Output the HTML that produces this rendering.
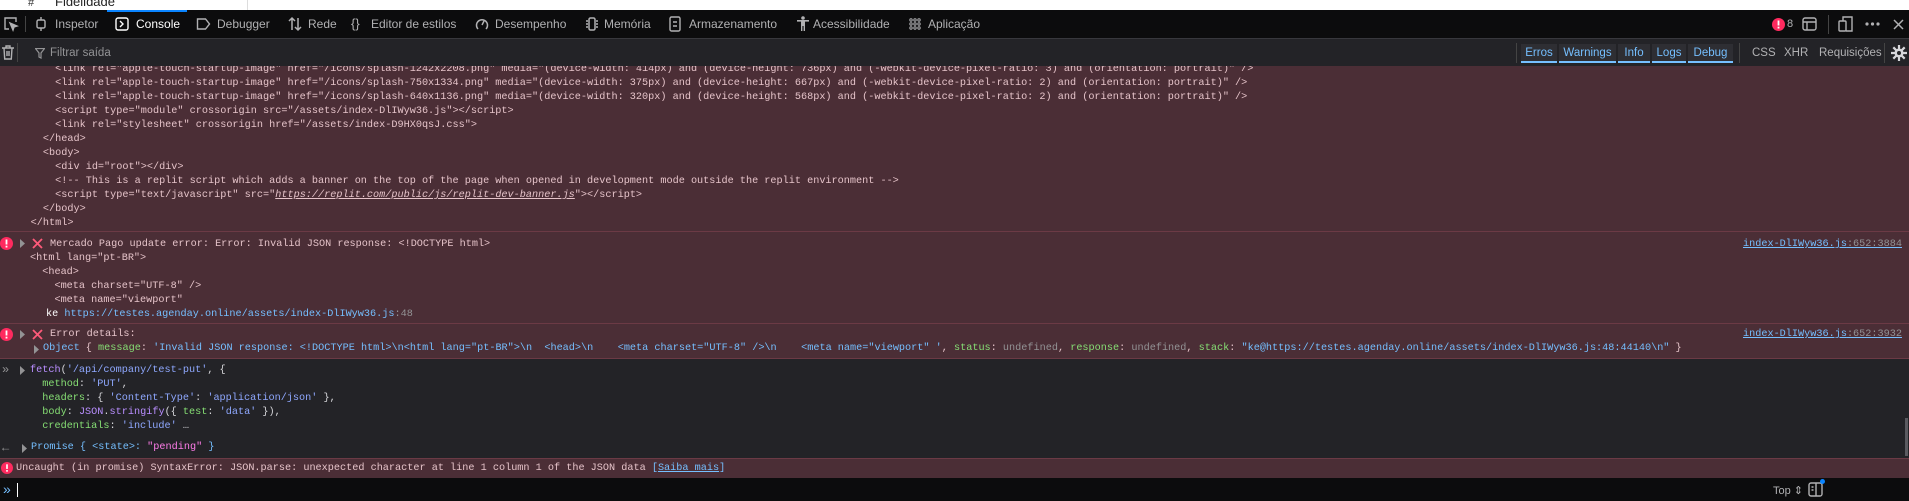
<!DOCTYPE html>
<html><head><meta charset="utf-8">
<style>
*{margin:0;padding:0;box-sizing:border-box}
body{width:1909px;height:501px;overflow:hidden;background:#232327;position:relative;font-family:"Liberation Sans",sans-serif}
.a{position:absolute}
.m{font-family:"Liberation Mono",monospace;font-size:10.2px;line-height:14px;white-space:pre;position:absolute}
.tab{position:absolute;top:10px;height:28px;line-height:28px;font-size:12px;color:#b1b1b3}
.fb{position:absolute;top:44px;height:19px;line-height:18px;font-size:11.5px;color:#75bfff;background:#2e2e33;border-bottom:2px solid #75bfff;text-align:center}
.e{color:#e5c3c9}
.l{color:#75bfff}
.g{color:#86de74}
.s{color:#8fa8ff}
.p{color:#b98eff}
.k{color:#ff7de9}
.gr{color:#939395}
.sep{position:absolute;left:0;width:1909px;height:1px;background:#6b3a45}
svg{position:absolute}
</style></head><body>
<div class="a" style="left:0;top:0;width:1909px;height:10px;background:#fff"></div>
<div class="a" style="left:247px;top:0;width:1px;height:10px;background:#ddd"></div>
<div class="a" style="left:55px;top:-6px;font-size:13px;color:#222">Fidelidade</div>
<div class="a" style="left:28px;top:-3px;font-size:11px;color:#333">#</div>
<div class="a" style="left:0;top:10px;width:1909px;height:28px;background:#0c0c0d"></div>
<div class="a" style="left:107px;top:10px;width:80px;height:2px;background:#0a84ff"></div>
<svg style="left:3px;top:16px" width="16" height="16" viewBox="0 0 16 16" fill="none" stroke="#b1b1b3" stroke-width="1.4"><path d="M6 13H2V2h11v4"/><path d="M7 7l7 3-3 1-1 3z" fill="#b1b1b3"/></svg>
<div class="a" style="left:25px;top:16px;width:1px;height:16px;background:#444"></div>
<svg style="left:34px;top:17px" width="14" height="14" viewBox="0 0 14 14" fill="none" stroke="#b1b1b3" stroke-width="1.4"><rect x="3" y="3" width="8" height="8" rx="1.5"/><path d="M7 0v3M7 11v3"/></svg>
<div class="tab" style="left:55px">Inspetor</div>
<svg style="left:115px;top:17px" width="14" height="14" viewBox="0 0 14 14" fill="none" stroke="#fff" stroke-width="1.4"><rect x="1" y="1" width="12" height="12" rx="2"/><path d="M5 4l3 3-3 3"/></svg>
<div class="tab" style="left:136px;color:#fff">Console</div>
<svg style="left:196px;top:17px" width="15" height="14" viewBox="0 0 15 14" fill="none" stroke="#b1b1b3" stroke-width="1.4"><path d="M1.5 2h8l4 5-4 5h-8z"/></svg>
<div class="tab" style="left:217px">Debugger</div>
<svg style="left:287px;top:16px" width="16" height="16" viewBox="0 0 16 16" fill="none" stroke="#b1b1b3" stroke-width="1.5"><path d="M5 14V2M2 5l3-3 3 3M11 2v12M8 11l3 3 3-3"/></svg>
<div class="tab" style="left:308px">Rede</div>
<div class="tab" style="left:351px;color:#b1b1b3;font-size:13px">{}</div>
<div class="tab" style="left:371px">Editor de estilos</div>
<svg style="left:475px;top:17px" width="14" height="14" viewBox="0 0 14 14" fill="none" stroke="#b1b1b3" stroke-width="1.5"><path d="M3 12A5.5 5.5 0 1 1 11 12"/><path d="M7 8l2-4"/></svg>
<div class="tab" style="left:495px">Desempenho</div>
<svg style="left:585px;top:17px" width="14" height="14" viewBox="0 0 14 14" fill="none" stroke="#b1b1b3" stroke-width="1.5"><rect x="4" y="1" width="6" height="12" rx="1.5"/><path d="M1 4h2M1 7h2M1 10h2M11 4h2M11 7h2M11 10h2"/></svg>
<div class="tab" style="left:604px">Memória</div>
<svg style="left:669px;top:16px" width="12" height="16" viewBox="0 0 12 16" fill="none" stroke="#b1b1b3" stroke-width="1.4"><rect x="1" y="1" width="10" height="14" rx="1.5"/><path d="M4 6h4M4 10h4"/></svg>
<div class="tab" style="left:689px">Armazenamento</div>
<svg style="left:797px;top:16px" width="12" height="16" viewBox="0 0 12 16" fill="#b1b1b3"><circle cx="6" cy="2" r="1.8"/><path d="M0 4h12v1.6H8V15H6.6v-5H5.4v5H4V5.6H0z"/></svg>
<div class="tab" style="left:813px">Acessibilidade</div>
<svg style="left:909px;top:18px" width="12" height="12" viewBox="0 0 12 12" fill="none" stroke="#b1b1b3" stroke-width="1"><circle cx="2" cy="2" r="1.2"/><circle cx="6" cy="2" r="1.2"/><circle cx="10" cy="2" r="1.2"/><circle cx="2" cy="6" r="1.2"/><circle cx="6" cy="6" r="1.2"/><circle cx="10" cy="6" r="1.2"/><circle cx="2" cy="10" r="1.2"/><circle cx="6" cy="10" r="1.2"/><circle cx="10" cy="10" r="1.2"/></svg>
<div class="tab" style="left:928px">Aplicação</div>
<svg style="left:1772px;top:18px" width="13" height="13" viewBox="0 0 13 13"><circle cx="6.5" cy="6.5" r="6.5" fill="#ff2a5f"/><rect x="5.6" y="2.5" width="1.8" height="5" fill="#fff"/><rect x="5.6" y="8.7" width="1.8" height="1.8" fill="#fff"/></svg>
<div class="a" style="left:1787px;top:18px;font-size:11px;color:#b1b1b3">8</div>
<svg style="left:1802px;top:17px" width="15" height="14" viewBox="0 0 15 14" fill="none" stroke="#b1b1b3" stroke-width="1.4"><rect x="1" y="1" width="13" height="12" rx="2"/><path d="M1 5h13M5 5v8"/></svg>
<div class="a" style="left:1828px;top:15px;width:1px;height:19px;background:#444"></div>
<svg style="left:1838px;top:16px" width="15" height="16" viewBox="0 0 15 16" fill="none" stroke="#b1b1b3" stroke-width="1.4"><rect x="1" y="5" width="7" height="10" rx="1"/><path d="M5 5V1h9v14H8"/></svg>
<svg style="left:1865px;top:22px" width="15" height="4" viewBox="0 0 15 4" fill="#b1b1b3"><circle cx="2" cy="2" r="1.6"/><circle cx="7.5" cy="2" r="1.6"/><circle cx="13" cy="2" r="1.6"/></svg>
<svg style="left:1893px;top:19px" width="11" height="11" viewBox="0 0 11 11" stroke="#b1b1b3" stroke-width="1.5"><path d="M1 1l9 9M10 1l-9 9"/></svg>
<div class="a" style="left:0;top:38px;width:1909px;height:28px;background:#232327;border-top:1px solid #38383d"></div>
<svg style="left:2px;top:45px" width="12" height="15" viewBox="0 0 12 15" fill="none" stroke="#b1b1b3" stroke-width="1.4"><path d="M0 3h12M4 3V1h4v2M2 3l.7 11h6.6L10 3M5 6v5M7 6v5"/></svg>
<div class="a" style="left:17px;top:43px;width:1px;height:19px;background:#444"></div>
<svg style="left:35px;top:48px" width="10" height="11" viewBox="0 0 10 11" fill="none" stroke="#939395" stroke-width="1.2"><path d="M.5 .5h9L6 5v5l-2-1V5z"/></svg>
<div class="a" style="left:50px;top:47px;font-size:11.5px;color:#939395">Filtrar saída</div>
<div class="a" style="left:1516px;top:43px;width:1px;height:20px;background:#444"></div>
<div class="fb" style="left:1521px;width:36px">Erros</div>
<div class="fb" style="left:1559px;width:57px">Warnings</div>
<div class="fb" style="left:1618px;width:32px">Info</div>
<div class="fb" style="left:1652px;width:34px">Logs</div>
<div class="fb" style="left:1688px;width:45px">Debug</div>
<div class="a" style="left:1739px;top:43px;width:1px;height:20px;background:#444"></div>
<div class="a" style="left:1752px;top:47px;font-size:11.5px;color:#b1b1b3">CSS</div>
<div class="a" style="left:1784px;top:47px;font-size:11.5px;color:#b1b1b3">XHR</div>
<div class="a" style="left:1819px;top:47px;font-size:11.5px;color:#b1b1b3">Requisições</div>
<div class="a" style="left:1884px;top:43px;width:1px;height:20px;background:#444"></div>
<svg style="left:1891px;top:45px" width="16" height="16" viewBox="0 0 16 16"><g stroke="#d7d7db" stroke-width="2.2"><path d="M8 0v16M0 8h16M2.3 2.3l11.4 11.4M13.7 2.3L2.3 13.7"/></g><circle cx="8" cy="8" r="4.5" fill="#d7d7db"/><circle cx="8" cy="8" r="2" fill="#232327"/></svg>
<div class="a" style="left:0;top:66px;width:1909px;height:292px;background:#4b2e36;overflow:hidden">
<div class="m e" style="left:-6px;top:-3px">          &lt;link rel="apple-touch-startup-image" href="/icons/splash-1242x2208.png" media="(device-width: 414px) and (device-height: 736px) and (-webkit-device-pixel-ratio: 3) and (orientation: portrait)" /&gt;
          &lt;link rel="apple-touch-startup-image" href="/icons/splash-750x1334.png" media="(device-width: 375px) and (device-height: 667px) and (-webkit-device-pixel-ratio: 2) and (orientation: portrait)" /&gt;
          &lt;link rel="apple-touch-startup-image" href="/icons/splash-640x1136.png" media="(device-width: 320px) and (device-height: 568px) and (-webkit-device-pixel-ratio: 2) and (orientation: portrait)" /&gt;
          &lt;script type="module" crossorigin src="/assets/index-DlIWyw36.js"&gt;&lt;/script&gt;
          &lt;link rel="stylesheet" crossorigin href="/assets/index-D9HX0qsJ.css"&gt;
        &lt;/head&gt;
        &lt;body&gt;
          &lt;div id="root"&gt;&lt;/div&gt;
          &lt;!-- This is a replit script which adds a banner on the top of the page when opened in development mode outside the replit environment --&gt;
          &lt;script type="text/javascript" src="<i style="text-decoration:underline">https://replit.com/public/js/replit-dev-banner.js</i>"&gt;&lt;/script&gt;
        &lt;/body&gt;
      &lt;/html&gt;</div>
</div>
<div class="sep" style="top:231px"></div>
<div class="sep" style="top:323px"></div>
<div class="sep" style="top:358px"></div>
<svg style="left:0;top:237px" width="13" height="13" viewBox="0 0 13 13"><circle cx="6.5" cy="6.5" r="6.5" fill="#ff2a5f"/><rect x="5.6" y="2.5" width="1.8" height="5" fill="#fff"/><rect x="5.6" y="8.7" width="1.8" height="1.8" fill="#fff"/></svg>
<svg style="left:20px;top:239px" width="6" height="9" viewBox="0 0 6 9"><path d="M0 0l5 4.5L0 9z" fill="#939395"/></svg>
<svg style="left:32px;top:238px" width="11" height="11" viewBox="0 0 11 11" stroke="#ff5a7a" stroke-width="1.8"><path d="M1 1l9 9M10 1l-9 9"/></svg>
<div class="m e" style="left:50px;top:238px">Mercado Pago update error: Error: Invalid JSON response: &lt;!DOCTYPE html&gt;</div>
<div class="m e" style="left:30px;top:252px">&lt;html lang="pt-BR"&gt;
  &lt;head&gt;
    &lt;meta charset="UTF-8" /&gt;
    &lt;meta name="viewport"</div>
<div class="m" style="left:46px;top:308px;color:#fff">ke <span class="l">https://testes.agenday.online/assets/index-DlIWyw36.js</span><span class="gr">:48</span></div>
<div class="m l" style="left:1743px;top:238px;text-decoration:underline">index-DlIWyw36.js<span class="gr">:652:3884</span></div>
<svg style="left:0;top:328px" width="13" height="13" viewBox="0 0 13 13"><circle cx="6.5" cy="6.5" r="6.5" fill="#ff2a5f"/><rect x="5.6" y="2.5" width="1.8" height="5" fill="#fff"/><rect x="5.6" y="8.7" width="1.8" height="1.8" fill="#fff"/></svg>
<svg style="left:20px;top:330px" width="6" height="9" viewBox="0 0 6 9"><path d="M0 0l5 4.5L0 9z" fill="#939395"/></svg>
<svg style="left:32px;top:329px" width="11" height="11" viewBox="0 0 11 11" stroke="#ff5a7a" stroke-width="1.8"><path d="M1 1l9 9M10 1l-9 9"/></svg>
<div class="m e" style="left:50px;top:328px">Error details:</div>
<div class="m l" style="left:1743px;top:328px;text-decoration:underline">index-DlIWyw36.js<span class="gr">:652:3932</span></div>
<svg style="left:34px;top:345px" width="6" height="9" viewBox="0 0 6 9"><path d="M0 0l5 4.5L0 9z" fill="#939395"/></svg>
<div class="m l" style="left:43px;top:342px">Object <span class="e">{</span> <span class="g">message</span><span class="e">:</span> 'Invalid JSON response: &lt;!DOCTYPE html&gt;\n&lt;html lang="pt-BR"&gt;\n  &lt;head&gt;\n    &lt;meta charset="UTF-8" /&gt;\n    &lt;meta name="viewport" '<span class="e">,</span> <span class="g">status</span><span class="e">:</span> <span class="gr">undefined</span><span class="e">,</span> <span class="g">response</span><span class="e">:</span> <span class="gr">undefined</span><span class="e">,</span> <span class="g">stack</span><span class="e">:</span> "ke@https://testes.agenday.online/assets/index-DlIWyw36.js:48:44140\n" <span class="e">}</span></div>
<div class="m" style="left:2px;top:363px;color:#939395;font-size:12px">»</div>
<svg style="left:20px;top:366px" width="6" height="9" viewBox="0 0 6 9"><path d="M0 0l5 4.5L0 9z" fill="#939395"/></svg>
<div class="m" style="left:30px;top:364px;color:#d7d7db"><span class="p">fetch</span>(<span class="s">'/api/company/test-put'</span>, {
  <span class="g">method</span>: <span class="s">'PUT'</span>,
  <span class="g">headers</span>: { <span class="s">'Content-Type'</span>: <span class="s">'application/json'</span> },
  <span class="g">body</span>: <span class="p">JSON</span>.<span class="p">stringify</span>({ <span class="g">test</span>: <span class="s">'data'</span> }),
  <span class="g">credentials</span>: <span class="s">'include'</span> …</div>
<div class="m" style="left:2px;top:441px;color:#939395;font-size:12px">←</div>
<svg style="left:22px;top:444px" width="6" height="9" viewBox="0 0 6 9"><path d="M0 0l5 4.5L0 9z" fill="#939395"/></svg>
<div class="m" style="left:31px;top:441px;color:#75bfff">Promise { &lt;state&gt;: <span class="k">"pending"</span> }</div>
<div class="a" style="left:1905px;top:418px;width:3px;height:38px;background:#5a5a60"></div>
<div class="a" style="left:0;top:458px;width:1909px;height:20px;background:#4b2e36;border-top:1px solid #6b3a45"></div>
<svg style="left:1px;top:462px" width="12" height="12" viewBox="0 0 13 13"><circle cx="6.5" cy="6.5" r="6.5" fill="#ff2a5f"/><rect x="5.6" y="2.5" width="1.8" height="5" fill="#fff"/><rect x="5.6" y="8.7" width="1.8" height="1.8" fill="#fff"/></svg>
<div class="m e" style="left:16px;top:462px">Uncaught (in promise) SyntaxError: JSON.parse: unexpected character at line 1 column 1 of the JSON data <span class="l">[<u>Saiba mais</u>]</span></div>
<div class="a" style="left:0;top:478px;width:1909px;height:23px;background:#0c0c0d"></div>
<div class="a" style="left:3px;top:481px;color:#75bfff;font-size:14px">»</div>
<div class="a" style="left:17px;top:483px;width:1px;height:14px;background:#fff"></div>
<div class="a" style="left:1773px;top:484px;font-size:11px;color:#b1b1b3">Top ⇕</div>
<svg style="left:1808px;top:481px" width="15" height="16" viewBox="0 0 15 16" fill="none" stroke="#b1b1b3" stroke-width="1.4"><rect x="1" y="2" width="13" height="13" rx="2"/><path d="M8 2v13M3.5 6h2M3.5 9h2"/></svg>
<div class="a" style="left:1820px;top:479px;width:5px;height:5px;border-radius:50%;background:#0a84ff"></div>
</body></html>
